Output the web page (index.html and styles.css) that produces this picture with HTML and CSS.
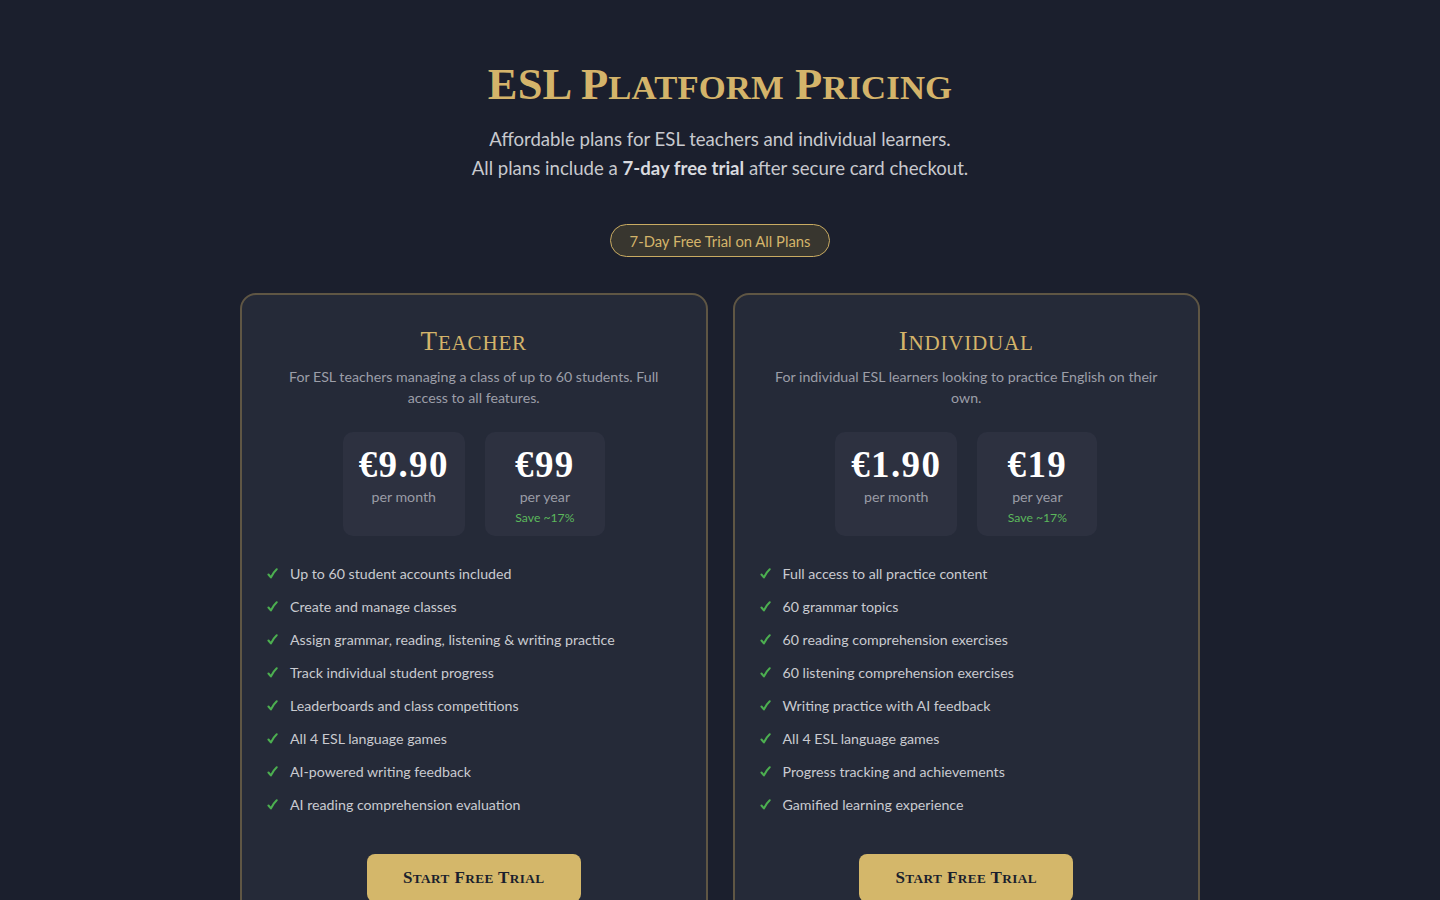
FILE: index.html
```html
<!DOCTYPE html>
<html lang="en">
<head>
<meta charset="utf-8">
<title>ESL Platform Pricing</title>
<link rel="stylesheet" href="styles.css">
</head>
<body>
<main class="page">
  <header class="hero">
    <h1 class="title">ESL P<span class="sc">latform</span> P<span class="sc">ricing</span></h1>
    <p class="subtitle">Affordable plans for ESL teachers and individual learners.<br>All plans include a <strong>7-day free trial</strong> after secure card checkout.</p>
    <div class="badge">7-Day Free Trial on All Plans</div>
  </header>

  <section class="plans">
    <article class="card">
      <h2 class="plan-name">T<span class="sc">eacher</span></h2>
      <p class="plan-desc">For ESL teachers managing a class of up to 60 students. Full access to all features.</p>
      <div class="prices">
        <div class="price-box">
          <div class="amount">€9.90</div>
          <div class="period">per month</div>
        </div>
        <div class="price-box">
          <div class="amount">€99</div>
          <div class="period">per year</div>
          <div class="save">Save ~17%</div>
        </div>
      </div>
      <ul class="features">
        <li><svg class="check" viewBox="0 0 12 12" aria-hidden="true"><path d="M1.6 7.1 L4.2 10.3 C6 6.6 8 3.8 10.6 1.4"/></svg>Up to 60 student accounts included</li>
        <li><svg class="check" viewBox="0 0 12 12" aria-hidden="true"><path d="M1.6 7.1 L4.2 10.3 C6 6.6 8 3.8 10.6 1.4"/></svg>Create and manage classes</li>
        <li><svg class="check" viewBox="0 0 12 12" aria-hidden="true"><path d="M1.6 7.1 L4.2 10.3 C6 6.6 8 3.8 10.6 1.4"/></svg>Assign grammar, reading, listening &amp; writing practice</li>
        <li><svg class="check" viewBox="0 0 12 12" aria-hidden="true"><path d="M1.6 7.1 L4.2 10.3 C6 6.6 8 3.8 10.6 1.4"/></svg>Track individual student progress</li>
        <li><svg class="check" viewBox="0 0 12 12" aria-hidden="true"><path d="M1.6 7.1 L4.2 10.3 C6 6.6 8 3.8 10.6 1.4"/></svg>Leaderboards and class competitions</li>
        <li><svg class="check" viewBox="0 0 12 12" aria-hidden="true"><path d="M1.6 7.1 L4.2 10.3 C6 6.6 8 3.8 10.6 1.4"/></svg>All 4 ESL language games</li>
        <li><svg class="check" viewBox="0 0 12 12" aria-hidden="true"><path d="M1.6 7.1 L4.2 10.3 C6 6.6 8 3.8 10.6 1.4"/></svg>AI-powered writing feedback</li>
        <li><svg class="check" viewBox="0 0 12 12" aria-hidden="true"><path d="M1.6 7.1 L4.2 10.3 C6 6.6 8 3.8 10.6 1.4"/></svg>AI reading comprehension evaluation</li>
      </ul>
      <button class="cta">S<span class="sc">tart</span> F<span class="sc">ree</span> T<span class="sc">rial</span></button>
    </article>

    <article class="card">
      <h2 class="plan-name">I<span class="sc">ndividual</span></h2>
      <p class="plan-desc">For individual ESL learners looking to practice English on their own.</p>
      <div class="prices">
        <div class="price-box">
          <div class="amount">€1.90</div>
          <div class="period">per month</div>
        </div>
        <div class="price-box">
          <div class="amount">€19</div>
          <div class="period">per year</div>
          <div class="save">Save ~17%</div>
        </div>
      </div>
      <ul class="features">
        <li><svg class="check" viewBox="0 0 12 12" aria-hidden="true"><path d="M1.6 7.1 L4.2 10.3 C6 6.6 8 3.8 10.6 1.4"/></svg>Full access to all practice content</li>
        <li><svg class="check" viewBox="0 0 12 12" aria-hidden="true"><path d="M1.6 7.1 L4.2 10.3 C6 6.6 8 3.8 10.6 1.4"/></svg>60 grammar topics</li>
        <li><svg class="check" viewBox="0 0 12 12" aria-hidden="true"><path d="M1.6 7.1 L4.2 10.3 C6 6.6 8 3.8 10.6 1.4"/></svg>60 reading comprehension exercises</li>
        <li><svg class="check" viewBox="0 0 12 12" aria-hidden="true"><path d="M1.6 7.1 L4.2 10.3 C6 6.6 8 3.8 10.6 1.4"/></svg>60 listening comprehension exercises</li>
        <li><svg class="check" viewBox="0 0 12 12" aria-hidden="true"><path d="M1.6 7.1 L4.2 10.3 C6 6.6 8 3.8 10.6 1.4"/></svg>Writing practice with AI feedback</li>
        <li><svg class="check" viewBox="0 0 12 12" aria-hidden="true"><path d="M1.6 7.1 L4.2 10.3 C6 6.6 8 3.8 10.6 1.4"/></svg>All 4 ESL language games</li>
        <li><svg class="check" viewBox="0 0 12 12" aria-hidden="true"><path d="M1.6 7.1 L4.2 10.3 C6 6.6 8 3.8 10.6 1.4"/></svg>Progress tracking and achievements</li>
        <li><svg class="check" viewBox="0 0 12 12" aria-hidden="true"><path d="M1.6 7.1 L4.2 10.3 C6 6.6 8 3.8 10.6 1.4"/></svg>Gamified learning experience</li>
      </ul>
      <button class="cta">S<span class="sc">tart</span> F<span class="sc">ree</span> T<span class="sc">rial</span></button>
    </article>
  </section>
</main>
</body>
</html>
```

FILE: styles.css
```css
* { box-sizing: border-box; }

html, body {
  margin: 0;
  padding: 0;
  background: #1b1f2d;
}

body {
  font-family: "Lato", "Noto Sans", "Liberation Sans", sans-serif;
  color: #c9cad0;
}

.page {
  width: 960px;
  margin: 0 auto;
  padding-top: 57px;
}

.sc {
  text-transform: uppercase;
  font-size: 0.78em;
  line-height: 1;
}

.hero {
  display: flex;
  flex-direction: column;
  align-items: center;
  text-align: center;
}

.title {
  margin: 0;
  font-family: "Liberation Serif", "DejaVu Serif", serif;
  font-weight: 700;
  font-size: 44.5px;
  line-height: 55px;
  letter-spacing: 0.1px;
  color: #d4b46a;
}

.subtitle {
  margin: 13px 0 0;
  font-size: 18.6px;
  line-height: 29px;
  color: #c8c9ce;
}

.subtitle strong {
  font-weight: 700;
  color: #d9dadf;
}

.badge {
  margin-top: 41px;
  height: 33px;
  padding: 0 19px;
  display: flex;
  align-items: center;
  border: 1px solid #c9ab62;
  border-radius: 17px;
  background: #38362f;
  color: #d4b46a;
  font-size: 14.8px;
}

.plans {
  margin-top: 36px;
  display: grid;
  grid-template-columns: 1fr 1fr;
  gap: 25px;
}

.card {
  display: flex;
  flex-direction: column;
  align-items: center;
  padding: 31px 24px 40px;
  background: #252a38;
  border: 2px solid #5f5644;
  border-radius: 16px;
  text-align: center;
}

.plan-name {
  margin: 0;
  font-family: "Liberation Serif", "DejaVu Serif", serif;
  font-weight: 400;
  font-size: 27px;
  line-height: 31px;
  letter-spacing: 0.8px;
  color: #d4b46a;
}

.plan-desc {
  margin: 9px 0 0;
  max-width: 392px;
  font-size: 14.2px;
  line-height: 21px;
  color: #9c9ea8;
}

.prices {
  margin-top: 24px;
  display: flex;
  gap: 20px;
  justify-content: center;
}

.price-box {
  min-width: 120px;
  padding: 15px 16px 9px;
  background: #2d3140;
  border-radius: 10px;
  display: flex;
  flex-direction: column;
  align-items: center;
}

.amount {
  font-family: "Liberation Serif", "DejaVu Serif", serif;
  font-weight: 700;
  font-size: 37px;
  line-height: 36px;
  color: #ffffff;
  letter-spacing: 1.4px;
}

.period {
  margin-top: 3px;
  font-size: 14.2px;
  line-height: 21px;
  color: #9a9ca6;
}

.save {
  margin-top: 2px;
  font-size: 12.2px;
  line-height: 18px;
  color: #5cb85c;
}

.features {
  list-style: none;
  margin: 21px 0 0;
  padding: 0;
  align-self: stretch;
  text-align: left;
}

.features li {
  display: flex;
  align-items: center;
  height: 33px;
  font-size: 14.2px;
  color: #c9cad0;
}

.check {
  flex: none;
  width: 11px;
  height: 11px;
  margin: 0 12px 0 1px;
  fill: none;
  stroke: #4caf50;
  stroke-width: 2.2;
  stroke-linecap: round;
  stroke-linejoin: round;
}

.cta {
  margin-top: 33px;
  height: 48px;
  padding: 0 36px;
  border: none;
  border-radius: 8px;
  background: #d4b76a;
  color: #1b1f2d;
  font-family: "Liberation Serif", "DejaVu Serif", serif;
  font-weight: 700;
  font-size: 17px;
  letter-spacing: 0.4px;
  cursor: pointer;
}
```
